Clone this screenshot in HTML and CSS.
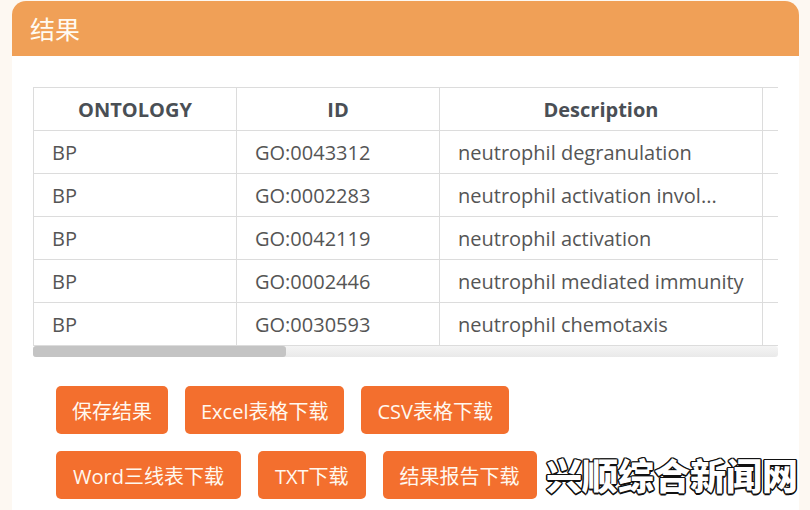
FILE: index.html
```html
<!DOCTYPE html>
<html lang="zh">
<head>
<meta charset="utf-8">
<link rel="stylesheet" href="styles.css">
</head>
<body>
<div class="card">
  <div class="card-head">结果</div>
  <div class="card-body">
    <div class="table-wrap">
      <table class="result">
        <thead>
          <tr>
            <th class="c1">ONTOLOGY</th>
            <th class="c2">ID</th>
            <th class="c3">Description</th>
            <th class="c4"></th>
          </tr>
        </thead>
        <tbody>
          <tr><td>BP</td><td>GO:0043312</td><td>neutrophil degranulation</td><td></td></tr>
          <tr><td>BP</td><td>GO:0002283</td><td>neutrophil activation invol...</td><td></td></tr>
          <tr><td>BP</td><td>GO:0042119</td><td>neutrophil activation</td><td></td></tr>
          <tr><td>BP</td><td>GO:0002446</td><td>neutrophil mediated immunity</td><td></td></tr>
          <tr><td>BP</td><td>GO:0030593</td><td>neutrophil chemotaxis</td><td></td></tr>
        </tbody>
      </table>
    </div>
    <div class="scrollbar"><div class="thumb"></div></div>
    <div class="actions">
      <div class="btn-row">
        <button class="btn">保存结果</button>
        <button class="btn">Excel表格下载</button>
        <button class="btn">CSV表格下载</button>
      </div>
      <div class="btn-row">
        <button class="btn">Word三线表下载</button>
        <button class="btn">TXT下载</button>
        <button class="btn">结果报告下载</button>
      </div>
    </div>
  </div>
</div>
<div class="watermark">兴顺综合新闻网</div>
</body>
</html>
```

FILE: styles.css
```css
html, body {
  margin: 0;
  padding: 0;
}
body {
  background: #fdf8f2;
  font-family: "Open Sans", "Noto Sans CJK SC", sans-serif;
  width: 810px;
  height: 510px;
  overflow: hidden;
  position: relative;
}
.card {
  margin: 1px 0 0 12px;
  width: 787px;
  background: #ffffff;
  border-radius: 14px 14px 0 0;
  height: 520px;
}
.card-head {
  height: 55px;
  background: #f0a057;
  border-radius: 14px 14px 0 0;
  color: #fffaf2;
  font-family: "Noto Sans CJK SC", sans-serif;
  font-size: 25px;
  line-height: 55px;
  padding-left: 18px;
}
.card-body {
  padding: 31px 20px 0 21px;
}
.table-wrap {
  width: 745px;
  overflow: hidden;
}
.result {
  border-collapse: collapse;
  table-layout: fixed;
  width: 949px;
}
.result th,
.result td {
  border: 1px solid #dcdcdc;
  height: 43px;
  box-sizing: border-box;
  white-space: nowrap;
  overflow: hidden;
  padding: 0 18px;
}
.result th {
  font-size: 20px;
  font-weight: 700;
  color: #4a4f55;
  text-align: center;
}
.result td {
  font-size: 20px;
  color: #555555;
  text-align: left;
}
.c1, .c2 { width: 203px; }
.c3 { width: 323px; }
.c4 { width: 220px; }
.scrollbar {
  width: 745px;
  height: 11px;
  background: linear-gradient(#f4f4f4, #e9e9e9);
  border-radius: 3px;
}
.thumb {
  width: 253px;
  height: 11px;
  background: #c4c4c4;
  border-radius: 3px;
}
.actions {
  padding: 29px 0 0 23px;
  display: flex;
  flex-direction: column;
  gap: 17px;
}
.btn-row {
  display: flex;
  gap: 17px;
}
.btn {
  height: 48px;
  border: none;
  border-radius: 5px;
  background: #f36f2e;
  color: #fff8ef;
  font-family: "Open Sans", "Noto Sans CJK SC", sans-serif;
  font-size: 20px;
  padding: 0 16px;
  cursor: pointer;
}
.btn-row + .btn-row .btn {
  padding: 0 17px;
}
.watermark {
  position: absolute;
  left: 546px;
  top: 452px;
  font-family: "Noto Sans CJK SC", sans-serif;
  font-weight: 900;
  font-size: 36px;
  line-height: 44px;
  color: #ffffff;
  text-shadow:
    1.5px 0 #111, -1.5px 0 #111, 0 1.5px #111, 0 -1.5px #111,
    1px 1px #111, -1px 1px #111, 1px -1px #111, -1px -1px #111;
}
```
